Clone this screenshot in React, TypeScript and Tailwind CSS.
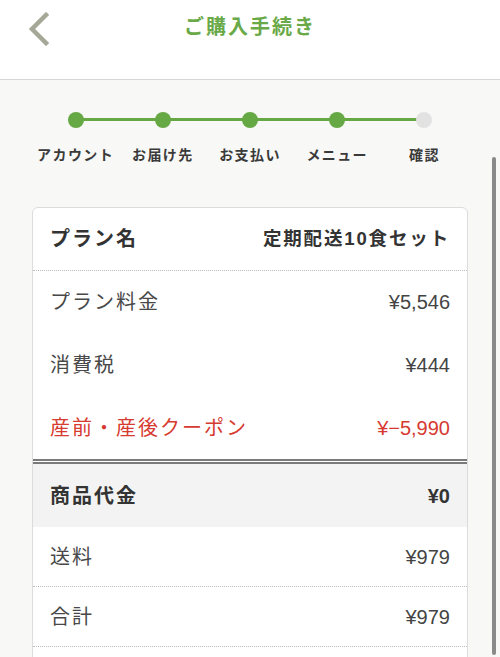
import React from "react";

const steps = [
  { label: "アカウント", done: true },
  { label: "お届け先", done: true },
  { label: "お支払い", done: true },
  { label: "メニュー", done: true },
  { label: "確認", done: false },
];

const font = { fontFamily: '"Liberation Sans", "Noto Sans CJK JP", sans-serif' };

function Row({
  label,
  value,
  className = "",
  labelClass = "",
  valueClass = "",
}: {
  label: string;
  value: string;
  className?: string;
  labelClass?: string;
  valueClass?: string;
}) {
  return (
    <div className={`flex items-center justify-between px-[17px] ${className}`}>
      <span className={`text-[20px] tracking-[0.1em] leading-[28px] ${labelClass}`}>{label}</span>
      <span className={`leading-[28px] ${valueClass}`}>{value}</span>
    </div>
  );
}

export default function App() {
  return (
    <div className="relative h-[657px] w-[500px] overflow-hidden bg-[#f8f8f6]" style={font}>
      {/* Header */}
      <header className="grid h-[80px] grid-cols-[60px_1fr_60px] border-b border-[#d6d6d6] bg-white">
        <div className="pl-[27px] pt-[12px]">
          <svg width="24" height="34" viewBox="0 0 24 34" fill="none">
            <path d="M19 3 L5 17 L19 31" stroke="#a5a897" strokeWidth="4.5" strokeLinecap="square" />
          </svg>
        </div>
        <h1 className="pt-[13px] text-center text-[20px] font-bold leading-[28px] tracking-[0.1em] text-[#69a947]">
          ご購入手続き
        </h1>
        <div />
      </header>

      <main className="px-[32px] pt-[32px]">
        {/* Stepper */}
        <div className="relative">
          <div className="absolute left-[43px] right-[43px] top-[6px] h-[3px] bg-[#66a844]" />
          <div className="relative grid grid-cols-5">
            {steps.map((s) => (
              <div key={s.label} className="flex flex-col items-center">
                <span
                  className={`h-[16px] w-[16px] rounded-full ${s.done ? "bg-[#66a844]" : "bg-[#e2e2e2]"}`}
                />
                <span className="mt-[17px] whitespace-nowrap text-[14px] font-bold leading-[20px] tracking-[0.1em] text-[#3a3a3a]">
                  {s.label}
                </span>
              </div>
            ))}
          </div>
        </div>

        {/* Card */}
        <div className="mt-[42px] overflow-hidden rounded-[6px] border border-[#dcdcdc] bg-white">
          <Row
            label="プラン名"
            value="定期配送10食セット"
            className="h-[63px] border-b border-dotted border-[#bdbdbd]"
            labelClass="font-bold text-[#333]"
            valueClass="text-[18.5px] font-bold tracking-[0.1em] text-[#333]"
          />
          <Row label="プラン料金" value="¥5,546" className="h-[62px]" labelClass="text-[#484848]" valueClass="text-[20px] text-[#444]" />
          <Row label="消費税" value="¥444" className="h-[63px]" labelClass="text-[#484848]" valueClass="text-[20px] text-[#444]" />
          <Row
            label="産前・産後クーポン"
            value="¥−5,990"
            className="h-[63px]"
            labelClass="text-[#d63a30]"
            valueClass="text-[20px] text-[#d63a30]"
          />
          <div className="border-t-[5px] border-double border-[#7a7a7a]" />
          <Row
            label="商品代金"
            value="¥0"
            className="h-[63px] bg-[#f3f3f3]"
            labelClass="font-bold text-[#333]"
            valueClass="text-[20px] font-bold text-[#333]"
          />
          <Row
            label="送料"
            value="¥979"
            className="h-[60px] border-b border-dotted border-[#bdbdbd]"
            labelClass="text-[#484848]"
            valueClass="text-[20px] text-[#444]"
          />
          <Row
            label="合計"
            value="¥979"
            className="h-[60px] border-b border-dotted border-[#bdbdbd]"
            labelClass="text-[#484848]"
            valueClass="text-[20px] text-[#444]"
          />
          <div className="h-[60px]" />
        </div>
      </main>

      {/* overlay scrollbar */}
      <div className="absolute right-[4px] top-[157px] h-[498px] w-[4px] rounded-full bg-[#8a8a8a]" />
    </div>
  );
}
